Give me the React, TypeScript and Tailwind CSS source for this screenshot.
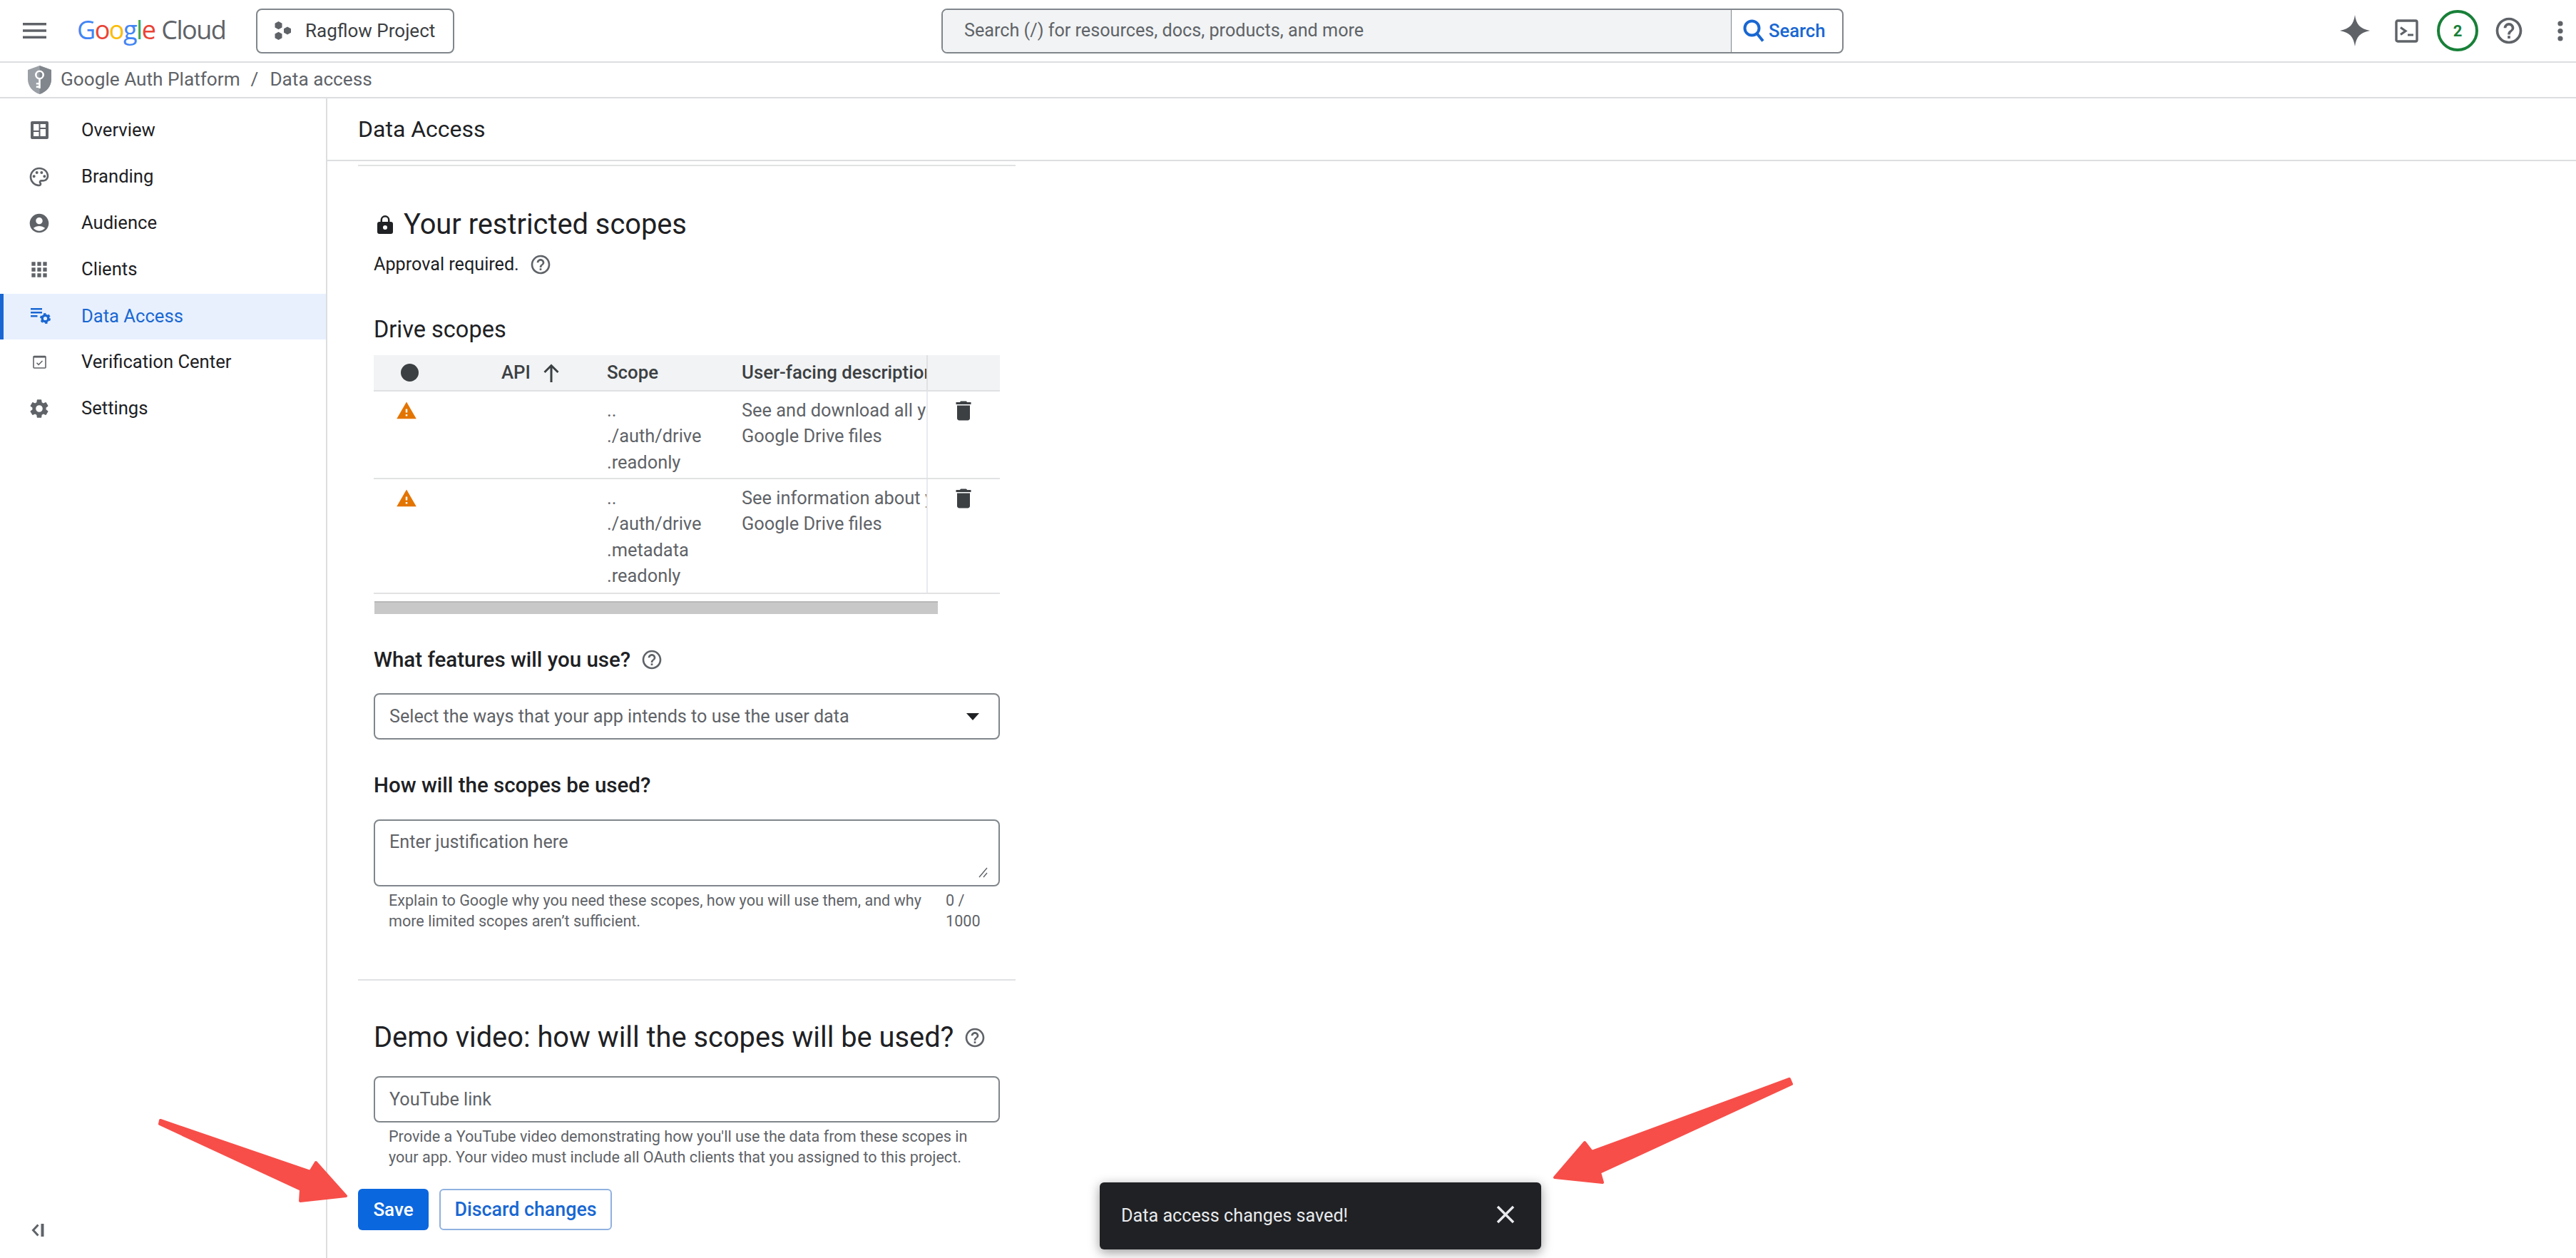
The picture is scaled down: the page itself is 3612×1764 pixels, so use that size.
import type { ReactNode } from 'react';

const font = "font-['Roboto','Liberation_Sans',sans-serif]";

// material icons (24 box)
function Mi({ d, className, fill = 'currentColor' }: { d: string; className: string; fill?: string }) {
  return (
    <svg viewBox="0 0 24 24" className={className} fill={fill}>
      <path d={d} />
    </svg>
  );
}

const HELP =
  'M11 18h2v-2h-2v2zm1-16C6.48 2 2 6.48 2 12s4.48 10 10 10 10-4.48 10-10S17.52 2 12 2zm0 18c-4.41 0-8-3.59-8-8s3.59-8 8-8 8 3.59 8 8-3.59 8-8 8zm0-14c-2.21 0-4 1.79-4 4h2c0-1.1.9-2 2-2s2 .9 2 2c0 2-3 1.75-3 5h2c0-2.25 3-2.5 3-5 0-2.21-1.79-4-4-4z';
const TRASH = 'M6 19c0 1.1.9 2 2 2h8c1.1 0 2-.9 2-2V7H6v12zM19 4h-3.5l-1-1h-5l-1 1H5v2h14V4z';
const WARN = 'M1 21h22L12 2 1 21zm12-3h-2v-2h2v2zm0-4h-2v-4h2v4z';

const navItems: { label: string; active?: boolean; icon: ReactNode }[] = [
  {
    label: 'Overview',
    icon: (
      <svg viewBox="0 0 25 25" className="w-[25px] h-[25px]" fill="currentColor" fillRule="evenodd">
        <path d="M2 0h21a2 2 0 0 1 2 2v21a2 2 0 0 1-2 2H2a2 2 0 0 1-2-2V2a2 2 0 0 1 2-2zM4 4v9h7.500V4zM13.500 4v5h7.500V4zM4 15v6h7.500v-6zM13.500 11v10h7.500V11z" />
      </svg>
    ),
  },
  {
    label: 'Branding',
    icon: (
      <Mi
        className="w-[32px] h-[32px]"
        d="M12 2C6.49 2 2 6.49 2 12s4.49 10 10 10c1.38 0 2.5-1.12 2.5-2.5 0-.61-.23-1.2-.64-1.67-.08-.1-.13-.21-.13-.33 0-.28.22-.5.5-.5H16c3.31 0 6-2.69 6-6 0-4.96-4.49-9-10-9zm4 13h-1.77c-1.38 0-2.5 1.12-2.5 2.5 0 .61.22 1.19.63 1.65.06.07.14.19.14.35 0 .28-.22.5-.5.5-4.41 0-8-3.59-8-8s3.59-8 8-8 8 3.14 8 7c0 2.21-1.79 4-4 4zM6.500 13a1.500 1.500 0 1 0 0-3 1.500 1.500 0 0 0 0 3zm3-4a1.500 1.500 0 1 0 0-3 1.500 1.500 0 0 0 0 3zm5 0a1.500 1.500 0 1 0 0-3 1.500 1.500 0 0 0 0 3zm3 4a1.500 1.500 0 1 0 0-3 1.500 1.500 0 0 0 0 3z"
      />
    ),
  },
  {
    label: 'Audience',
    icon: (
      <Mi
        className="w-[32px] h-[32px]"
        d="M12 2C6.48 2 2 6.48 2 12s4.48 10 10 10 10-4.48 10-10S17.52 2 12 2zm0 4c1.93 0 3.5 1.57 3.5 3.5S13.93 13 12 13s-3.5-1.57-3.5-3.5S10.07 6 12 6zm0 14c-2.03 0-4.43-.82-6.14-2.88C7.55 15.8 9.68 15 12 15s4.45.8 6.14 2.12C16.43 19.18 14.03 20 12 20z"
      />
    ),
  },
  {
    label: 'Clients',
    icon: (
      <Mi
        className="w-[32px] h-[32px]"
        d="M4 8h4V4H4v4zm6 12h4v-4h-4v4zm-6 0h4v-4H4v4zm0-6h4v-4H4v4zm6 0h4v-4h-4v4zm6-10v4h4V4h-4zm-6 4h4V4h-4v4zm6 6h4v-4h-4v4zm0 6h4v-4h-4v4z"
      />
    ),
  },
  {
    label: 'Data Access',
    active: true,
    icon: (
      <svg viewBox="0 0 28 22" className="w-[28px] h-[22px] ml-[3px]" fill="currentColor" stroke="none">
        <path d="M0 0h16v2.400H0zM0 5h16v2.400H0zM0 10h9.500v2.400H0z" />
        <circle cx="20.500" cy="14.500" r="4.300" fill="none" stroke="currentColor" strokeWidth="3.400" />
        <circle cx="20.500" cy="14.500" r="6.300" fill="none" stroke="currentColor" strokeWidth="2.400" strokeDasharray="3.300 3.300" />
      </svg>
    ),
  },
  {
    label: 'Verification Center',
    icon: (
      <svg viewBox="0 0 19 19" className="w-[19px] h-[19px]" fill="none" stroke="currentColor">
        <rect x="1" y="1.500" width="17" height="16.500" rx="1" strokeWidth="1.600" />
        <path d="M1 2.500h17" strokeWidth="2.200" />
        <path d="M5.500 10.800l2.600 2.600 5.400-5.400" strokeWidth="1.500" />
      </svg>
    ),
  },
  {
    label: 'Settings',
    icon: (
      <Mi
        className="w-[32px] h-[32px]"
        d="M19.14 12.94c.04-.3.06-.61.06-.94s-.02-.64-.07-.94l2.03-1.58a.49.49 0 0 0 .12-.61l-1.92-3.32a.49.49 0 0 0-.59-.22l-2.39.96c-.5-.38-1.03-.7-1.62-.94l-.36-2.54a.48.48 0 0 0-.48-.41h-3.84c-.24 0-.43.17-.47.41l-.36 2.54c-.59.24-1.13.57-1.62.94l-2.39-.96c-.22-.08-.47 0-.59.22L2.74 8.87c-.12.21-.08.47.12.61l2.03 1.58c-.05.3-.09.63-.09.94s.02.64.07.94l-2.03 1.58a.49.49 0 0 0-.12.61l1.92 3.32c.12.22.37.29.59.22l2.39-.96c.5.38 1.03.7 1.62.94l.36 2.54c.05.24.24.41.48.41h3.84c.24 0 .44-.17.47-.41l.36-2.54c.59-.24 1.13-.56 1.62-.94l2.39.96c.22.08.47 0 .59-.22l1.92-3.32c.12-.22.07-.47-.12-.61l-2.01-1.58zM12 15.600a3.600 3.600 0 1 1 0-7.200 3.600 3.600 0 0 1 0 7.200z"
      />
    ),
  },
];

function Help({ className = '' }: { className?: string }) {
  return <Mi d={HELP} className={`w-[32px] h-[32px] text-[#5f6368] ${className}`} />;
}

function ScopeRow({
  scope,
  desc,
  height,
}: {
  scope: string[];
  desc: string;
  height: string;
}) {
  return (
    <div className={`flex ${height} border-b-2 border-[#e0e2e4]`}>
      <div className="w-[327px] pl-[31px] pt-[12px] shrink-0">
        <Mi d={WARN} className="w-[30px] h-[30px] text-[#e37400]" />
      </div>
      <div className="w-[189px] pt-[8px] shrink-0 text-[#5f6368] text-[25.4px] leading-[36.3px]">
        {scope.map((s) => (
          <div key={s}>{s}</div>
        ))}
      </div>
      <div className="w-[261px] pt-[8px] shrink-0 text-[#5f6368] text-[25.4px] leading-[36.3px] overflow-hidden whitespace-nowrap border-r-2 border-[#e8eaed]">
        <div>{desc}</div>
        <div>Google Drive files</div>
      </div>
      <div className="flex-1 pl-[32px] pt-[9px]">
        <Mi d={TRASH} className="w-[36px] h-[36px] text-[#3c4043]" />
      </div>
    </div>
  );
}

export default function App() {
  return (
    <div className={`relative w-[3612px] h-[1764px] overflow-hidden bg-white flex flex-col ${font}`}>
      {/* Top bar */}
      <header className="h-[88px] shrink-0 flex items-center border-b-2 border-[#dcdee0] relative">
        <svg viewBox="0 0 33 22" className="ml-[32px] w-[33px] h-[22px]" fill="#5f6368">
          <path d="M0 0h33v3.400H0zM0 9.300h33v3.400H0zM0 18.600h33V22H0z" />
        </svg>
        <div className="ml-[43px] w-[208px] whitespace-nowrap text-[36px] leading-none tracking-[-1.5px] font-['Open_Sans',sans-serif] -mt-[2px]">
          <span className="font-medium text-[#4285f4]">G</span>
          <span className="font-medium text-[#ea4335]">o</span>
          <span className="font-medium text-[#fbbc04]">o</span>
          <span className="font-medium text-[#4285f4]">g</span>
          <span className="font-medium text-[#34a853]">l</span>
          <span className="font-medium text-[#ea4335]">e</span>
          <span className="text-[#5f6368] ml-[9px]">Cloud</span>
        </div>
        <div className="ml-[43px] w-[278px] h-[63px] border-2 border-[#80868b] rounded-[8px] flex items-center">
          <svg viewBox="0 0 24 26" className="ml-[24px] w-[24px] h-[26px]" fill="#5f6368">
            <path d="M5.500 0l5 2.800v5.600l-5 2.800-5-2.800V2.800zM5.500 14.800l5 2.800v5.600l-5 2.800-5-2.800v-5.600zM18 7.400l5 2.800v5.600l-5 2.800-5-2.800v-5.600z" />
          </svg>
          <span className="ml-[19px] text-[26px] text-[#3c4043] whitespace-nowrap">Ragflow Project</span>
        </div>
        <div className="ml-[683px] w-[1265px] h-[63px] flex border-2 border-[#80868b] rounded-[8px] overflow-hidden">
          <div className="w-[1106px] bg-[#f1f3f4] flex items-center pl-[30px] text-[25.2px] text-[#5f6368] whitespace-nowrap border-r border-[#80868b]">
            Search (/) for resources, docs, products, and more
          </div>
          <div className="flex-1 flex items-center pl-[16px] text-[#1967d2] text-[25.6px] font-medium">
            <svg viewBox="0 0 30 32" className="w-[30px] h-[32px]" fill="none" stroke="currentColor" strokeWidth="4">
              <circle cx="12.500" cy="12.500" r="10" />
              <path d="M19.500 20l8.500 10.500" />
            </svg>
            <span className="ml-[6px]">Search</span>
          </div>
        </div>
        <div className="ml-auto flex items-center">
          <svg viewBox="0 0 42 44" className="w-[42px] h-[44px]" fill="#5f6368">
            <path d="M21 0c1.800 13 7 19.500 21 22-14 2.500-19.200 9-21 22-1.800-13-7-19.500-21-22C14 19.500 19.200 13 21 0z" />
          </svg>
          <svg viewBox="0 0 33 33" className="ml-[35px] w-[33px] h-[33px]" fill="none" stroke="#5f6368">
            <rect x="2" y="2" width="29" height="29" rx="2" strokeWidth="3.400" />
            <path d="M8 11.500l7 5-7 5" strokeWidth="3.200" />
            <path d="M18 22h8" strokeWidth="3" />
          </svg>
          <div className="ml-[26px] w-[58px] h-[58px] rounded-full border-[4px] border-[#188038] flex items-center justify-center text-[22px] font-bold text-[#188038]">
            2
          </div>
          <Mi d={HELP} className="ml-[21px] w-[44px] h-[44px] text-[#5f6368]" />
          <svg viewBox="0 0 8 29" className="ml-[46px] mr-[18px] w-[8px] h-[29px]" fill="#5f6368">
            <circle cx="4" cy="4" r="3.600" />
            <circle cx="4" cy="14.500" r="3.600" />
            <circle cx="4" cy="25" r="3.600" />
          </svg>
        </div>
      </header>

      {/* Breadcrumb */}
      <div className="h-[50px] shrink-0 flex items-center border-b-2 border-[#dcdee0] text-[#5f6368] text-[26.2px] whitespace-nowrap">
        <svg viewBox="0 0 33 40" className="ml-[39px] w-[33px] h-[40px]">
          <path d="M16.500 0L33 6v13c0 10-7 18-16.500 21C7 37 0 29 0 19V6z" fill="#9aa0a6" />
          <path d="M16.500 0L33 6v13c0 10-7 18-16.500 21z" fill="#80868b" />
          <circle cx="16.500" cy="13" r="5.200" fill="none" stroke="#fff" strokeWidth="2.600" />
          <path d="M15.200 18h2.600v14h-2.600zM11.800 24h3.400v2.400h-3.400zM11.800 28.500h3.400v2.400h-3.400z" fill="#fff" />
        </svg>
        <span className="ml-[13px]">Google Auth Platform</span>
        <span className="ml-[15px]">/</span>
        <span className="ml-[16px]">Data access</span>
      </div>

      <div className="flex-1 flex min-h-0">
        {/* Sidebar */}
        <aside className="w-[459px] shrink-0 border-r-2 border-[#dcdee0] flex flex-col pt-[12px]">
          {navItems.map((item) => (
            <div
              key={item.label}
              className={`flex items-center text-[25.6px] border-l-[5px] ${
                item.active
                  ? 'h-[64px] mt-[2px] -mb-[1px] pb-[2px] bg-[#e8f0fe] text-[#1967d2] border-[#1967d2]'
                  : 'h-[65px] text-[#202124] border-transparent'
              }`}
            >
              <span className={`w-[109px] shrink-0 pl-[34px] ${item.active ? 'text-[#1967d2]' : 'text-[#5f6368]'}`}>
                <span className="w-[32px] h-[32px] flex items-center justify-center">{item.icon}</span>
              </span>
              <span>{item.label}</span>
            </div>
          ))}
          <div className="mt-auto mb-[30px] ml-[44px] flex items-center text-[#5f6368]">
            <svg viewBox="0 0 20 18" className="w-[20px] h-[18px]" fill="none" stroke="currentColor">
              <path d="M9.500 1.500L2.500 9l7 7.500" strokeWidth="3" />
              <path d="M15.500 0v18" strokeWidth="4" />
            </svg>
          </div>
        </aside>

        {/* Main */}
        <main className="flex-1 min-w-0">
          <div className="h-[88px] flex items-center pl-[43px] border-b-2 border-[#dcdee0] text-[32px] text-[#202124]">
            Data Access
          </div>
          <div className="pl-[43px] w-[965px]">
            <div className="mt-[5px] border-t-2 border-[#e0e2e4]" />
            <div className="pl-[22px] pr-[22px]">
              <h2 className="mt-[62px] flex items-center h-[40px] text-[39.8px] text-[#202124] whitespace-nowrap">
                <svg viewBox="0 0 22 26" className="w-[22px] h-[26px] ml-[5px] mr-[15px]" fill="#202124">
                  <path d="M19 9h-1.500V6.500a6.500 6.500 0 0 0-13 0V9H3a3 3 0 0 0-3 3v11a3 3 0 0 0 3 3h16a3 3 0 0 0 3-3V12a3 3 0 0 0-3-3zM11 20a3 3 0 1 1 0-6 3 3 0 0 1 0 6zm4-11H7V6.500a4 4 0 0 1 8 0z" />
                </svg>
                Your restricted scopes
              </h2>
              <div className="mt-[18px] h-[36px] flex items-center text-[25.2px] text-[#202124] whitespace-nowrap">
                Approval required.
                <Help className="ml-[14px]" />
              </div>
              <h3 className="mt-[55px] h-[36px] flex items-center text-[32.5px] text-[#202124]">Drive scopes</h3>

              {/* Table */}
              <div className="mt-[18px] w-[878px]">
                <div className="flex h-[51px] items-center bg-[#f1f3f4] border-b-2 border-[#dfe1e3] font-medium text-[25.8px] text-[#3c4043]">
                  <div className="w-[179px] shrink-0 pl-[38px]">
                    <div className="w-[25px] h-[25px] rounded-full bg-[#3c4043]" />
                  </div>
                  <div className="w-[148px] shrink-0 flex items-center whitespace-nowrap">
                    API
                    <svg viewBox="0 0 24 26" className="ml-[17px] w-[24px] h-[26px]" fill="none" stroke="#3c4043" strokeWidth="3">
                      <path d="M12 26V3M2.500 12L12 2.500 21.500 12" />
                    </svg>
                  </div>
                  <div className="w-[189px] shrink-0">Scope</div>
                  <div className="w-[261px] h-full shrink-0 flex items-center whitespace-nowrap overflow-hidden border-r-2 border-[#dfe1e3]">
                    User-facing description
                  </div>
                </div>
                <ScopeRow
                  height="h-[123px]"
                  scope={['..', './auth/drive', '.readonly']}
                  desc="See and download all your"
                />
                <ScopeRow
                  height="h-[161px]"
                  scope={['..', './auth/drive', '.metadata', '.readonly']}
                  desc="See information about your"
                />
              </div>
              <div className="mt-[10px] ml-[1px] w-[790px] h-[18px] bg-[#c8c8c8] border-t-2 border-[#b8b8b8]" />

              <div className="mt-[44px] h-[40px] flex items-center text-[29.5px] font-medium text-[#202124] whitespace-nowrap">
                What features will you use?
                <Help className="ml-[14px]" />
              </div>
              <div className="mt-[27px] w-[878px] h-[65px] border-2 border-[#80868b] rounded-[8px] flex items-center pl-[20px] pr-[26px] text-[25.2px] text-[#5f6368] whitespace-nowrap">
                Select the ways that your app intends to use the user data
                <svg viewBox="0 0 18 10" className="ml-auto w-[20px] h-[10px]" fill="#202124">
                  <path d="M0 0h18L9 10z" />
                </svg>
              </div>
              <div className="mt-[44px] h-[40px] flex items-center text-[29.5px] font-medium text-[#202124] whitespace-nowrap">
                How will the scopes be used?
              </div>
              <div className="relative mt-[28px] w-[878px] h-[94px] border-2 border-[#80868b] rounded-[8px] pl-[20px] pt-[11px] text-[25.2px] text-[#5f6368]">
                Enter justification here
                <svg viewBox="0 0 16 16" className="absolute right-[14px] bottom-[10px] w-[16px] h-[16px]" stroke="#5f6368" strokeWidth="1.400">
                  <path d="M3 15L14 2M9 15l5-6" />
                </svg>
              </div>
              <div className="mt-[6px] w-[878px] flex pl-[21px] text-[21.6px] leading-[28.5px] text-[#5f6368]">
                <div className="w-[781px] shrink-0">
                  Explain to Google why you need these scopes, how you will use them, and why
                  <br />
                  more limited scopes aren’t sufficient.
                </div>
                <div>
                  0 /
                  <br />
                  1000
                </div>
              </div>
            </div>
            <div className="mt-[67px] border-t-2 border-[#e0e2e4]" />
            <div className="pl-[22px]">
              <h2 className="mt-[58px] h-[44px] flex items-center text-[39.8px] text-[#202124] whitespace-nowrap">
                Demo video: how will the scopes will be used?
                <Help className="ml-[14px]" />
              </h2>
              <div className="mt-[32px] w-[878px] h-[65px] border-2 border-[#80868b] rounded-[8px] flex items-center pl-[20px] text-[25.2px] text-[#5f6368]">
                YouTube link
              </div>
              <div className="mt-[6px] pl-[21px] w-[878px] text-[21.6px] leading-[28.5px] text-[#5f6368]">
                Provide a YouTube video demonstrating how you'll use the data from these scopes in
                <br />
                your app. Your video must include all OAuth clients that you assigned to this project.
              </div>
            </div>
            <div className="mt-[30px] flex gap-[15px]">
              <div className="w-[99px] h-[58px] rounded-[6px] bg-[#0b67de] text-white text-[26px] font-medium flex items-center justify-center">
                Save
              </div>
              <div className="w-[242px] h-[58px] rounded-[6px] border-2 border-[#8fb1df] text-[#1967d2] text-[26.8px] font-medium flex items-center justify-center whitespace-nowrap">
                Discard changes
              </div>
            </div>
          </div>
        </main>
      </div>

      {/* Toast */}
      <div className="absolute left-[1542px] top-[1658px] w-[619px] h-[94px] rounded-[6px] bg-[#202124] flex items-center pl-[30px] text-[25.2px] text-[#e8eaed] shadow-[0_4px_16px_rgba(0,0,0,0.4)] whitespace-nowrap">
        Data access changes saved!
        <svg viewBox="0 0 24 24" className="absolute left-[548px] top-[24px] w-[42px] h-[42px]" fill="#e8eaed">
          <path d="M19 6.410L17.590 5 12 10.590 6.410 5 5 6.410 10.590 12 5 17.590 6.410 19 12 13.410 17.590 19 19 17.590 13.410 12z" />
        </svg>
      </div>

      {/* Red annotation arrows */}
      <svg viewBox="0 0 3612 1764" className="absolute inset-0 w-[3612px] h-[1764px] pointer-events-none" fill="#f74e49" stroke="#f74e49" strokeWidth="4" strokeLinejoin="round">
        <path d="M225 1571L224 1576L422 1668L421 1684L485 1677L443 1630L435 1643z" />
        <path d="M2509 1513L2512 1520L2243 1644L2247 1658L2180 1651L2222 1602L2232 1615z" />
      </svg>
    </div>
  );
}
